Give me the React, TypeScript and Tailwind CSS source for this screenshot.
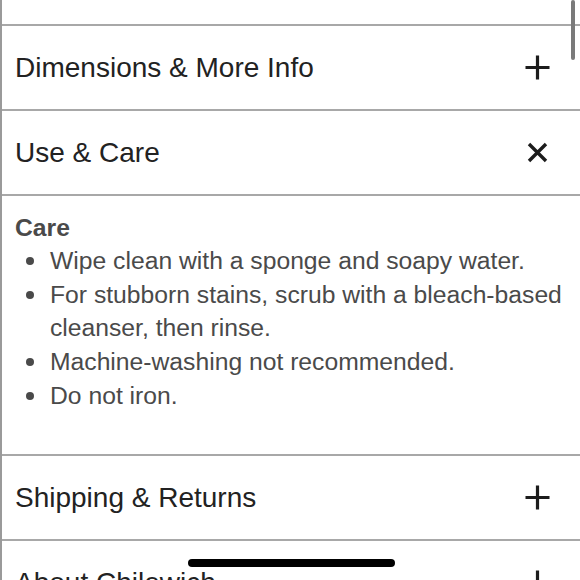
import React from 'react';

interface Section {
  id: string;
  title: string;
  open?: boolean;
}

const SECTIONS: Section[] = [
  { id: 'dimensions', title: 'Dimensions & More Info' },
  { id: 'care', title: 'Use & Care', open: true },
  { id: 'shipping', title: 'Shipping & Returns' },
  { id: 'about', title: 'About Chilewich' },
];

const CARE_ITEMS = [
  'Wipe clean with a sponge and soapy water.',
  'For stubborn stains, scrub with a bleach-based cleanser, then rinse.',
  'Machine-washing not recommended.',
  'Do not iron.',
];

const PlusIcon = () => (
  <svg className="w-[25px] h-[25px]" viewBox="0 0 25 25" fill="none" stroke="#1c1c1c" strokeWidth={3.2}>
    <path d="M12.5 0.5v24M0.5 12.5h24" />
  </svg>
);

const CloseIcon = () => (
  <svg className="w-[21px] h-[21px]" viewBox="0 0 21 21" fill="none" stroke="#1c1c1c" strokeWidth={3.4}>
    <path d="M2 2l17 17M19 2L2 19" />
  </svg>
);

export default function App() {
  return (
    <div
      className="relative h-[580px] w-[580px] overflow-hidden bg-white border-l-2 border-[#9a9a9a]"
      style={{ fontFamily: '"Liberation Sans", Arial, sans-serif' }}
    >
      {/* Tail of the previous panel */}
      <div className="h-[24px]" />

      {SECTIONS.map(section => (
        <div key={section.id} className="border-t-2 border-[#a8a8a8]">
          <div className="h-[83px] flex items-center justify-between pl-[13px] pr-[30px]">
            <span className="text-[28px] text-[#222]">{section.title}</span>
            <div className="w-[26px] flex justify-center">
              {section.open ? <CloseIcon /> : <PlusIcon />}
            </div>
          </div>

          {section.open && (
            <div className="border-t-2 border-[#a8a8a8] h-[260px] pl-[13px] pt-[16px] text-[#4a4a4a]">
              <h3 className="text-[24.7px] font-bold leading-[32px]">Care</h3>
              <ul className="text-[24.7px] leading-[33.7px]">
                {CARE_ITEMS.map(item => (
                  <li key={item} className="flex">
                    <span className="w-[35px] shrink-0 flex pl-[11px] pt-[13px]">
                      <span className="w-[8px] h-[8px] rounded-full bg-[#4a4a4a]" />
                    </span>
                    <span>{item}</span>
                  </li>
                ))}
              </ul>
            </div>
          )}
        </div>
      ))}

      {/* Scroll indicator */}
      <div className="absolute right-[5px] top-0 w-[4px] h-[60px] rounded-full bg-[#7a7a7a]" />

      {/* Home indicator */}
      <div className="absolute left-[186px] top-[559px] w-[207px] h-[8px] rounded-full bg-black" />
    </div>
  );
}
